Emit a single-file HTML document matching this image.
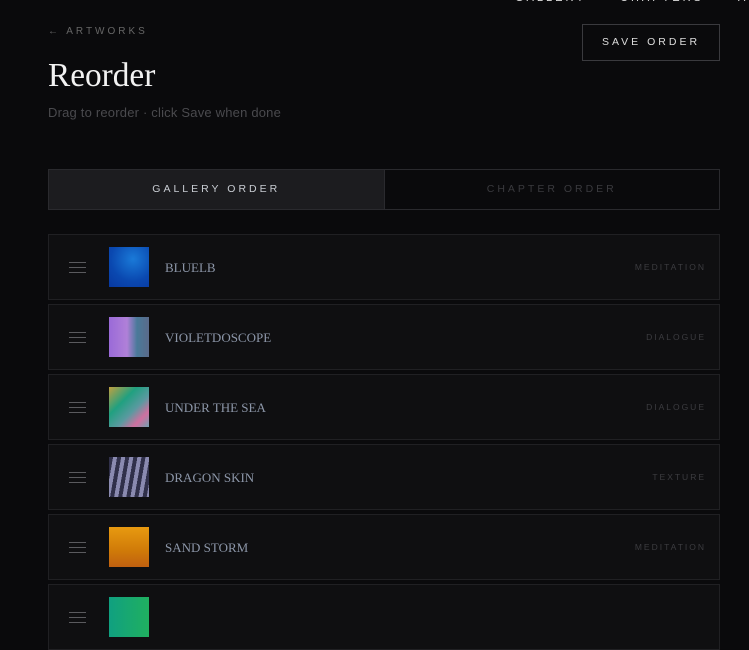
<!DOCTYPE html>
<html><head><meta charset="utf-8"><style>
*{margin:0;padding:0;box-sizing:border-box}
body{width:749px;height:607px;overflow:hidden;background:#0a0a0c;font-family:"Liberation Sans",sans-serif;position:relative}
.nav{position:absolute;top:-8px;font-size:11px;letter-spacing:3px;color:#ddd}
.back{position:absolute;left:48px;top:26px;font-size:10px;letter-spacing:3px;color:#666}
h1{position:absolute;left:48px;top:57px;font-family:"Liberation Serif",serif;font-weight:normal;font-size:34px;color:#f2f2f2;transform:scaleX(.98);transform-origin:left}
.sub{position:absolute;left:48px;top:105px;font-size:13px;color:#4a4a4e;letter-spacing:.2px}
.save{position:absolute;left:582px;top:24px;width:138px;height:37px;border:1px solid #3a3a3e;color:#ddd;font-size:10.5px;letter-spacing:3px;text-align:center;line-height:35px}
.tabs{position:absolute;left:48px;top:169px;width:672px;height:41px;border:1px solid #2a2a2e;display:flex}
.tabs div{flex:1;text-align:center;line-height:39px;font-size:10.5px;letter-spacing:3px}
.t1{background:#1c1c1f;color:#c8ccd2}
.t2{color:#3a3a3e;border-left:1px solid #2a2a2e}
.row{position:absolute;left:48px;width:672px;height:66px;border:1px solid #202023;background:#0f0f11}
.ham{position:absolute;left:20px;top:27px;width:17px}
.ham i{display:block;height:1px;background:#5a5a5e;margin-bottom:4px}
.th{position:absolute;left:60px;top:12px;width:40px;height:40px}
.tt{position:absolute;left:116px;top:25px;font-family:"Liberation Serif",serif;font-size:13px;color:#8c96a8;letter-spacing:0}
.tg{position:absolute;right:13px;top:27px;font-size:8.5px;letter-spacing:2px;color:#3c3c40}
</style></head><body>
<div class="nav" style="left:515px">GALLERY</div>
<div class="nav" style="left:620px">CHAPTERS</div>
<div class="nav" style="left:738px">A</div>
<div class="back">← ARTWORKS</div>
<h1>Reorder</h1>
<div class="sub">Drag to reorder · click Save when done</div>
<div class="save">SAVE ORDER</div>
<div class="tabs"><div class="t1">GALLERY ORDER</div><div class="t2">CHAPTER ORDER</div></div>

<div class="row" style="top:234px"><div class="ham"><i></i><i></i><i></i></div><div class="th" style="background:radial-gradient(circle at 60% 30%,#1a7ad8,#0a48b0 60%,#0838a0)"></div><div class="tt">BLUELB</div><div class="tg">MEDITATION</div></div>
<div class="row" style="top:304px"><div class="ham"><i></i><i></i><i></i></div><div class="th" style="background:linear-gradient(90deg,#9a6ad8,#b080d8 45%,#4a7a9a 70%,#5a6a8a)"></div><div class="tt">VIOLETDOSCOPE</div><div class="tg">DIALOGUE</div></div>
<div class="row" style="top:374px"><div class="ham"><i></i><i></i><i></i></div><div class="th" style="background:linear-gradient(135deg,#c0a040,#20a080 35%,#5a9aa0 60%,#d070a0 80%,#70a0b0)"></div><div class="tt">UNDER THE SEA</div><div class="tg">DIALOGUE</div></div>
<div class="row" style="top:444px"><div class="ham"><i></i><i></i><i></i></div><div class="th" style="background:repeating-linear-gradient(100deg,#30304a 0 4px,#8a8ab0 4px 8px)"></div><div class="tt">DRAGON SKIN</div><div class="tg">TEXTURE</div></div>
<div class="row" style="top:514px"><div class="ham"><i></i><i></i><i></i></div><div class="th" style="background:linear-gradient(180deg,#e89a10,#d07a08 60%,#c06010)"></div><div class="tt">SAND STORM</div><div class="tg">MEDITATION</div></div>
<div class="row" style="top:584px"><div class="ham"><i></i><i></i><i></i></div><div class="th" style="background:linear-gradient(90deg,#10a080,#20b060)"></div></div>
</body></html>
